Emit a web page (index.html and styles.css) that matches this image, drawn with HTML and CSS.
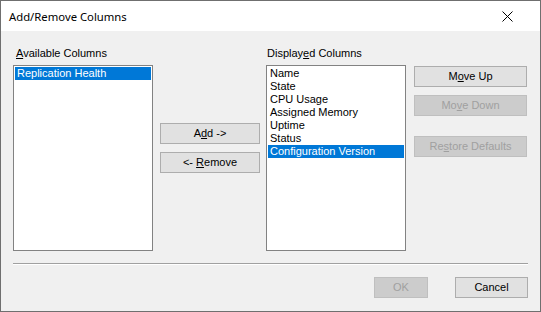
FILE: index.html
```html
<!DOCTYPE html>
<html>
<head>
<meta charset="utf-8">
<link rel="stylesheet" href="styles.css">
</head>
<body>
<div class="window">
  <div class="titlebar">
    <span class="title">Add/Remove Columns</span>
    <svg class="close" width="11" height="11" viewBox="0 0 11 11"><path d="M0.5 0.5 L10.5 10.5 M10.5 0.5 L0.5 10.5" stroke="#000" stroke-width="1" fill="none"/></svg>
  </div>
  <div class="body">
    <div class="main">
      <div class="col col-left">
        <div class="label label-left"><u>A</u>vailable Columns</div>
        <div class="list">
          <div class="item selected">Replication Health</div>
        </div>
      </div>
      <div class="col col-mid">
        <button class="btn">A<u>d</u>d -&gt;</button>
        <button class="btn">&lt;- <u>R</u>emove</button>
      </div>
      <div class="col col-right">
        <div class="label label-right">Display<u>e</u>d Columns</div>
        <div class="list">
          <div class="item">Name</div>
          <div class="item">State</div>
          <div class="item">CPU Usage</div>
          <div class="item">Assigned Memory</div>
          <div class="item">Uptime</div>
          <div class="item">Status</div>
          <div class="item selected">Configuration Version</div>
        </div>
      </div>
      <div class="col col-btns">
        <button class="btn">M<u>o</u>ve Up</button>
        <button class="btn disabled">Mo<u>v</u>e Down</button>
        <button class="btn disabled restore">Re<u>s</u>tore Defaults</button>
      </div>
    </div>
    <div class="separator"></div>
    <div class="footer">
      <button class="btn disabled ok">OK</button>
      <button class="btn cancel">Cancel</button>
    </div>
  </div>
</div>
</body>
</html>
```
FILE: styles.css
```css
html, body {
  margin: 0;
  padding: 0;
  background: #f0f0f0;
}
.window {
  width: 541px;
  height: 312px;
  box-sizing: border-box;
  border: 1px solid #6f6f6f;
  background: #f0f0f0;
  display: flex;
  flex-direction: column;
  font-family: "Liberation Sans", Arial, sans-serif;
  font-size: 11px;
  color: #000;
}
.titlebar {
  height: 30px;
  background: #fff;
  display: flex;
  align-items: center;
  justify-content: space-between;
  padding: 0 27px 0 8px;
  flex-shrink: 0;
}
.title {
  font-family: "Noto Sans", "Open Sans", sans-serif;
  font-size: 11.3px;
  color: #000;
  margin-top: 1px;
}
.close {
  display: block;
  margin-top: 1px;
}
.body {
  flex: 1;
  padding: 0 12px;
  display: flex;
  flex-direction: column;
}
.main {
  display: flex;
  margin-top: 16px;
}
.col {
  display: flex;
  flex-direction: column;
}
.label {
  height: 18px;
  line-height: 13px;
}
.label-left { padding-left: 3px; }
.label-right { padding-left: 1px; }
.list {
  width: 140px;
  height: 186px;
  box-sizing: border-box;
  border: 1px solid #828282;
  background: #fff;
  padding: 1px;
}
.item {
  height: 13px;
  line-height: 13px;
  padding-left: 2px;
  white-space: nowrap;
}
.item.selected {
  background: #0078d7;
  color: #fff;
}
.col-mid {
  margin-left: 7px;
  padding-top: 76px;
  gap: 8px;
}
.col-mid .btn {
  width: 100px;
}
.col-right {
  margin-left: 6px;
}
.col-btns {
  margin-left: 8px;
  padding-top: 19px;
  gap: 8px;
}
.col-btns .btn {
  width: 113px;
}
.col-btns .restore {
  margin-top: 12px;
}
.btn {
  height: 21px;
  box-sizing: border-box;
  border: 1px solid #adadad;
  background: #e1e1e1;
  font-family: "Liberation Sans", Arial, sans-serif;
  font-size: 11px;
  color: #000;
  padding: 0;
  margin: 0;
  line-height: 19px;
  text-align: center;
}
.btn.disabled {
  background: #cccccc;
  border-color: #bfbfbf;
  color: #a0a0a0;
}
.separator {
  margin-top: 12px;
  border-top: 1px solid #a0a0a0;
  border-bottom: 1px solid #fff;
  box-sizing: border-box;
  height: 2px;
}
.footer {
  display: flex;
  justify-content: flex-end;
  margin-top: 12px;
  gap: 27px;
}
.ok { width: 54px; }
.cancel { width: 73px; }
```
